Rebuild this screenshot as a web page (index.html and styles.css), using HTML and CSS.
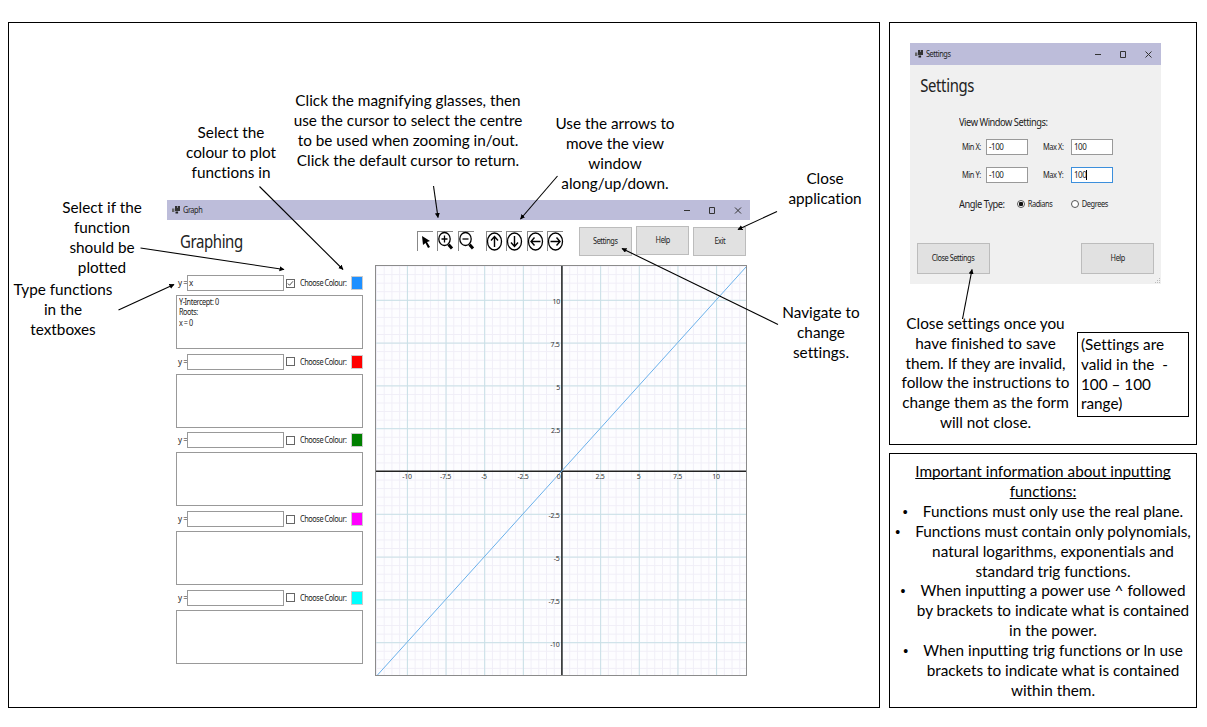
FILE: index.html
```html
<!DOCTYPE html>
<html lang="en">
<head>
<meta charset="utf-8">
<title>Graphing guide</title>
<link rel="stylesheet" href="styles.css">
</head>
<body>
<main class="page">
  <section class="panel graph-panel">
    <div class="window graph-window">
      <header class="titlebar">
        <svg class="app-icon" width="8" height="8" viewBox="0 0 8 8"><rect x="3" y="0" width="5" height="5" fill="#333"/><path d="M5.500 0v2" stroke="#bdbdda" stroke-width=".6"/><rect x="0" y="2.500" width="2.400" height="3.500" fill="#666"/><rect x="3.500" y="5.500" width="2.600" height="2" fill="#222"/></svg>
        <span class="ui t-title">Graph</span>
        <svg class="controls" width="62" height="10" viewBox="0 0 62 10"><path d="M1 5.500H7M26.500 2.500h5v6h-5zM52 2.500l6 6M58 2.500l-6 6" fill="none" stroke="#333" stroke-width="1"/></svg>
      </header>
      <div class="toolbar">
        <h1 class="ui">Graphing</h1>
        <div class="tools">
          <span class="tool"><svg viewBox="0 0 16 20"><path d="M5 5l8 5-3 1 3 5-2 1-2.500-5L6 14z" fill="#000"/></svg></span>
          <span class="tool"><svg viewBox="0 0 16 20"><ellipse cx="7.500" cy="8" rx="5.700" ry="6.500" fill="none" stroke="#000" stroke-width="1.300"/><path d="M4.500 8h6M7.500 4.500v7" stroke="#000" stroke-width="1.300"/><path d="M11.500 13.500l3.500 4" stroke="#000" stroke-width="3"/></svg></span>
          <span class="tool"><svg viewBox="0 0 16 20"><ellipse cx="7.500" cy="8" rx="5.700" ry="6.500" fill="none" stroke="#000" stroke-width="1.300"/><path d="M4.500 8h6" stroke="#000" stroke-width="1.300"/><path d="M11.500 13.500l3.500 4" stroke="#000" stroke-width="3"/></svg></span>
        </div>
        <div class="tools pan">
          <span class="tool"><svg viewBox="0 0 16 20"><ellipse cx="8.500" cy="10.500" rx="7" ry="8.500" fill="none" stroke="#000" stroke-width="1.300"/><path d="M8.500 16V5.500M5 9.500l3.500-4 3.500 4" fill="none" stroke="#000" stroke-width="1.400"/></svg></span>
          <span class="tool"><svg viewBox="0 0 16 20"><ellipse cx="8.500" cy="10.500" rx="7" ry="8.500" fill="none" stroke="#000" stroke-width="1.300"/><path d="M8.500 5v10.500M5 11.500l3.500 4 3.500-4" fill="none" stroke="#000" stroke-width="1.400"/></svg></span>
          <span class="tool"><svg viewBox="0 0 16 20"><ellipse cx="8.500" cy="10.500" rx="7" ry="8.500" fill="none" stroke="#000" stroke-width="1.300"/><path d="M13.500 10.500H4M7.500 6.500l-3.500 4 3.500 4" fill="none" stroke="#000" stroke-width="1.400"/></svg></span>
          <span class="tool"><svg viewBox="0 0 16 20"><ellipse cx="8.500" cy="10.500" rx="7" ry="8.500" fill="none" stroke="#000" stroke-width="1.300"/><path d="M3.500 10.500H13M9.500 6.500l3.500 4-3.500 4" fill="none" stroke="#000" stroke-width="1.400"/></svg></span>
        </div>
        <div class="buttons">
          <div class="btn"><span class="ui">Settings</span></div>
          <div class="btn raised"><span class="ui">Help</span></div>
          <div class="btn"><span class="ui">Exit</span></div>
        </div>
      </div>
      <div class="workspace">
        <div class="functions">
          <div class="fn"><div class="fn-row"><span class="ui yeq">y =</span><div class="field"><span class="ui">x</span></div><span class="check"><svg viewBox="0 0 8 8"><path d="M1 4l1.900 2L6.800 1.500" fill="none" stroke="#333" stroke-width="1"/></svg></span><span class="ui choose">Choose Colour:</span><span class="swatch blue"></span></div><div class="result"><span class="ui">Y-Intercept: 0<br>Roots:<br>x = 0</span></div></div>
          <div class="fn"><div class="fn-row"><span class="ui yeq">y =</span><div class="field"></div><span class="check"></span><span class="ui choose">Choose Colour:</span><span class="swatch red"></span></div><div class="result"></div></div>
          <div class="fn"><div class="fn-row"><span class="ui yeq">y =</span><div class="field"></div><span class="check"></span><span class="ui choose">Choose Colour:</span><span class="swatch green"></span></div><div class="result"></div></div>
          <div class="fn"><div class="fn-row"><span class="ui yeq">y =</span><div class="field"></div><span class="check"></span><span class="ui choose">Choose Colour:</span><span class="swatch magenta"></span></div><div class="result"></div></div>
          <div class="fn"><div class="fn-row"><span class="ui yeq">y =</span><div class="field"></div><span class="check"></span><span class="ui choose">Choose Colour:</span><span class="swatch cyan"></span></div><div class="result"></div></div>
        </div>
        <svg class="plot" width="372" height="411" viewBox="375 265 372 411">
          <defs>
            <pattern id="minor" x="561.500" y="471" width="7.730" height="8.560" patternUnits="userSpaceOnUse"><path d="M0 .5H7.730M.5 0V8.560" stroke="#f0eef7" stroke-width="1"/></pattern>
            <pattern id="major" x="561.500" y="471" width="38.650" height="42.800" patternUnits="userSpaceOnUse"><path d="M0 .5H38.650M.5 0V42.800" stroke="#c8e0e6" stroke-width="1"/></pattern>
          </defs>
          <rect x="375" y="265" width="372" height="411" fill="#fdfdff"/>
          <rect x="375" y="265" width="372" height="411" fill="url(#minor)"/>
          <rect x="375" y="265" width="372" height="411" fill="url(#major)"/>
          <path d="M376 471.200H747M561.900 265V676" stroke="#222" stroke-width="1.500"/>
          <path d="M377.500 675L746 267" stroke="#6ab0ea" stroke-width="1"/>
          <rect x="375.500" y="265.500" width="371" height="410" fill="none" stroke="#8b8b8b"/>
          <g class="ticks" text-anchor="middle">
            <text x="407" y="479">-10</text><text x="445.500" y="479">-7.5</text><text x="484" y="479">-5</text><text x="523" y="479">-2.5</text><text x="558.500" y="479">0</text><text x="600" y="479">2.5</text><text x="638.500" y="479">5</text><text x="677.500" y="479">7.5</text><text x="716" y="479">10</text>
          </g>
          <g class="ticks" text-anchor="end">
            <text x="560" y="304">10</text><text x="559.500" y="347">7.5</text><text x="560" y="389.500">5</text><text x="560" y="432.500">2.5</text><text x="559.500" y="518">-2.5</text><text x="559.500" y="561">-5</text><text x="559.500" y="603.500">-7.5</text><text x="559.500" y="646.500">-10</text>
          </g>
        </svg>
      </div>
    </div>
    <p class="callout c-colour">Select the<br>colour to plot<br>functions in</p>
    <p class="callout c-zoom">Click the magnifying glasses, then<br>use the cursor to select the centre<br>to be used when zooming in/out.<br>Click the default cursor to return.</p>
    <p class="callout c-arrows">Use the arrows to<br>move the view<br>window<br>along/up/down.</p>
    <p class="callout c-close">Close<br>application</p>
    <p class="callout c-plot">Select if the<br>function<br>should be<br>plotted</p>
    <p class="callout c-type">Type functions<br>in the<br>textboxes</p>
    <p class="callout c-nav">Navigate to<br>change<br>settings.</p>
  </section>
  <div class="side">
    <section class="panel settings-panel">
      <div class="window settings-window">
        <header class="titlebar">
          <svg class="app-icon" width="8" height="8" viewBox="0 0 8 8"><rect x="3" y="0" width="5" height="5" fill="#333"/><path d="M5.500 0v2" stroke="#bdbdda" stroke-width=".6"/><rect x="0" y="2.500" width="2.400" height="3.500" fill="#666"/><rect x="3.500" y="5.500" width="2.600" height="2" fill="#222"/></svg>
          <span class="ui t-title">Settings</span>
          <svg class="controls" width="62" height="10" viewBox="0 0 62 10"><path d="M1 5.500H7M26.500 2.500h5v6h-5zM51.500 2.500l6 6M57.500 2.500l-6 6" fill="none" stroke="#333" stroke-width="1"/></svg>
        </header>
        <h2 class="ui">Settings</h2>
        <h3 class="ui">View Window Settings:</h3>
        <div class="limits">
          <span class="ui">Min X:</span><div class="field"><span class="ui">-100</span></div><span class="ui">Max X:</span><div class="field"><span class="ui">100</span></div>
          <span class="ui">Min Y:</span><div class="field"><span class="ui">-100</span></div><span class="ui">Max Y:</span><div class="field focus"><span class="ui">100</span><i class="caret"></i></div>
        </div>
        <div class="angle"><h3 class="ui">Angle Type:</h3><span class="radio on"></span><span class="ui opt">Radians</span><span class="radio"></span><span class="ui opt">Degrees</span></div>
        <div class="actions"><div class="btn"><span class="ui">Close Settings</span></div><div class="btn"><span class="ui">Help</span></div></div>
        <svg class="grip" width="5" height="5" viewBox="0 0 5 5"><path d="M4 0h1v1h-1zM2 2h1v1h-1zM4 2h1v1h-1zM0 4h1v1h-1zM2 4h1v1h-1zM4 4h1v1h-1z" fill="#bbb"/></svg>
      </div>
      <div class="notes">
        <p class="note">Close settings once you<br>have finished to save<br>them. If they are invalid,<br>follow the instructions to<br>change them as the form<br>will not close.</p>
        <p class="note boxed">(Settings are<br>valid in the &nbsp;-<br>100 – 100<br>range)</p>
      </div>
    </section>
    <section class="panel info-panel">
      <h4>Important information about inputting<br>functions:</h4>
      <ul>
        <li><span class="dot">•</span>Functions must only use the real plane.</li>
        <li><span class="dot">•</span>Functions must contain only polynomials,<br>natural logarithms, exponentials and<br>standard trig functions.</li>
        <li><span class="dot">•</span>When inputting a power use ^ followed<br>by brackets to indicate what is contained<br>in the power.</li>
        <li><span class="dot">•</span>When inputting trig functions or ln use<br>brackets to indicate what is contained<br>within them.</li>
      </ul>
    </section>
  </div>
  <svg class="arrows" width="1207" height="727" viewBox="0 0 1207 727">
    <defs><marker id="head" markerWidth="6" markerHeight="6" refX="4.500" refY="2.500" orient="auto" markerUnits="userSpaceOnUse"><path d="M0 0L5 2.500L0 5z" fill="#000"/></marker></defs>
    <g stroke="#000" stroke-width="1.100">
      <path d="M259.500 186.500L343 269.500" marker-end="url(#head)"/>
      <path d="M433.500 186L438 217.500" marker-end="url(#head)"/>
      <path d="M557.500 176L520.500 219" marker-end="url(#head)"/>
      <path d="M777 211.500L738 229.500" marker-end="url(#head)"/>
      <path d="M140.500 248L284 269.500" marker-end="url(#head)"/>
      <path d="M118.500 310L174 284.500" marker-end="url(#head)"/>
      <path d="M778 324.500L622 248.500" marker-end="url(#head)"/>
      <path d="M962.500 319L972 269.500" marker-end="url(#head)"/>
    </g>
  </svg>
</main>
</body>
</html>
```
FILE: styles.css
```css
* { box-sizing: border-box; }
body { margin: 0; background: #fff; color: #000; font-family: Lato, "Liberation Sans", sans-serif; font-size: 15.3px; line-height: 19.9px; font-variant-ligatures: none; }
h1, h2, h3, h4, p, ul { margin: 0; padding: 0; font-weight: normal; }
.page { position: relative; width: 1207px; height: 727px; padding: 22px 10px 19px 8px; display: flex; gap: 9px; overflow: hidden; }
.panel { border: 1px solid #000; position: relative; }
.graph-panel { width: 872px; padding: 177px 0 0 158px; }
.side { width: 308px; display: flex; flex-direction: column; gap: 8px; }
.settings-panel { height: 423px; padding: 20px 7px 0 20px; }
.info-panel { flex: 1; padding: 8px 0 0; text-align: center; }

/* Application windows use a narrow interface face */
.ui { font-family: "Noto Sans", "Open Sans", sans-serif; font-size: 8px; line-height: 10.3px; letter-spacing: -0.48px; color: #222; white-space: nowrap; }
.titlebar { height: 20px; background: #bdbdda; display: flex; align-items: center; padding: 0 5px; }
.t-title { margin-left: 3px; transform: scaleX(.92); transform-origin: 0 50%; }
.controls { margin-left: auto; }
.graph-window { width: 583px; }
.toolbar { display: flex; height: 45px; padding-left: 13px; }
.toolbar h1 { width: 237px; font-size: 18.5px; line-height: 42px; letter-spacing: -0.5px; transform: scaleX(.81); transform-origin: 0 50%; }
.tools { display: flex; gap: 4.4px; padding-top: 11px; }
.pan { margin-left: 12px; }
.tool { width: 16px; height: 20px; border-top: 1px solid #888; border-left: 1px solid #888; display: block; }
.tool svg { width: 16px; height: 20px; display: block; margin: -1px 0 0 -1px; overflow: visible; }
.buttons { display: flex; gap: 4px; padding-top: 7px; margin-left: 16px; }
.btn { width: 53px; height: 29px; background: #e1e1e1; border: 1px solid #bcbcbc; display: flex; align-items: center; justify-content: center; }
.raised { margin-top: -1px; }
.workspace { display: flex; padding-left: 9px; }
.functions { width: 199px; padding-top: 10px; }
.fn { height: 78.7px; }
.fn-row { display: flex; align-items: center; height: 16px; width: 188px; }
.yeq { width: 11px; padding-left: 2px; }
.field { border: 1px solid #999; background: #fff; height: 16px; display: flex; align-items: center; padding-left: 2px; }
.fn .field { width: 97px; padding-left: 1px; }
.check { width: 9px; height: 9px; margin-left: 1.5px; border: 1px solid #666; background: #fff; display: flex; }
.choose { margin-left: 5px; width: 51px; transform: scaleX(.92); transform-origin: 0 50%; }
.swatch { width: 12px; height: 14px; border: 1px solid #ccc; margin-left: .5px; }
.blue { background: #1e90ff; }
.red { background: #f00; }
.green { background: #008000; }
.magenta { background: #f0f; }
.cyan { background: #0ff; }
.result { width: 187px; height: 54px; margin-top: 4px; border: 1px solid #999; padding: 1px 2px; line-height: 10.3px; }
.result .ui { display: block; transform: scaleX(.91); transform-origin: 0 50%; }
.plot { display: block; }
.ticks { font-family: "Noto Sans", sans-serif; font-size: 7px; letter-spacing: -0.3px; fill: #333; }

.callout { position: absolute; text-align: center; white-space: nowrap; transform: translateX(-50%); }
.c-colour { left: 222px; top: 100px; }
.c-zoom { left: 399px; top: 68px; }
.c-arrows { left: 606px; top: 91px; }
.c-close { left: 816px; top: 146px; }
.c-plot { left: 93px; top: 175px; }
.c-type { left: 54px; top: 257px; }
.c-nav { left: 812px; top: 280px; }
.arrows { position: absolute; left: 0; top: 0; pointer-events: none; }

.settings-window { width: 251px; height: 241px; background: #f0f0f0; position: relative; }
.settings-window .titlebar { height: 22px; }
.settings-window h2 { font-size: 17.5px; line-height: 24px; letter-spacing: -0.4px; padding: 8px 0 0 12px; transform: scaleX(.85); transform-origin: 0 50%; }
h3.ui { font-size: 10px; line-height: 14px; letter-spacing: -0.5px; transform: scaleX(.93); transform-origin: 0 50%; }
.settings-window > h3 { padding-top: 18px; margin-left: 49px; }
.limits { display: grid; grid-template-columns: 24px 57px 28px 42px; row-gap: 12px; padding: 10px 0 0 52px; align-items: center; }
.limits > .ui { transform: scaleX(.93); transform-origin: 0 50%; }
.limits .field { width: 42px; }
.focus { border-color: #3c8fdc; }
.caret { width: 1px; height: 10px; background: #000; }
.angle { display: flex; align-items: center; padding: 14px 0 0 49px; }
.angle h3 { width: 58px; }
.radio { width: 8px; height: 8px; border: 1px solid #555; border-radius: 50%; background: #fff; flex: none; }
.on { background: radial-gradient(#111 0 2px, #fff 2.5px); }
.opt { width: 43px; padding-left: 3px; transform: scaleX(.93); transform-origin: 0 50%; }
.angle .opt + .radio { margin-left: 3px; }
.actions { display: flex; justify-content: space-between; padding: 32px 7px 0; }
.actions .btn { width: 73px; height: 31px; }
.actions .ui, .buttons .ui { transform: scaleX(.92); }
.grip { position: absolute; right: 1px; bottom: 1px; }
.notes { display: flex; align-items: flex-start; margin-left: -10px; padding-top: 30px; line-height: 19.8px; }
.note { width: 171px; text-align: center; white-space: nowrap; }
.boxed { width: 112px; height: 85px; margin: 18px 0 0 6px; padding: 2px 3px; border: 1px solid #000; text-align: left; }
h4 { font-size: 15.3px; text-decoration: underline; text-decoration-skip-ink: none; text-decoration-thickness: 1px; }
ul { list-style: none; padding-left: 20px; white-space: nowrap; }
.dot { display: inline-block; width: 20px; margin-left: -20px; text-align: left; font-family: "Liberation Sans", sans-serif; font-size: 14px; line-height: 1; }
```
